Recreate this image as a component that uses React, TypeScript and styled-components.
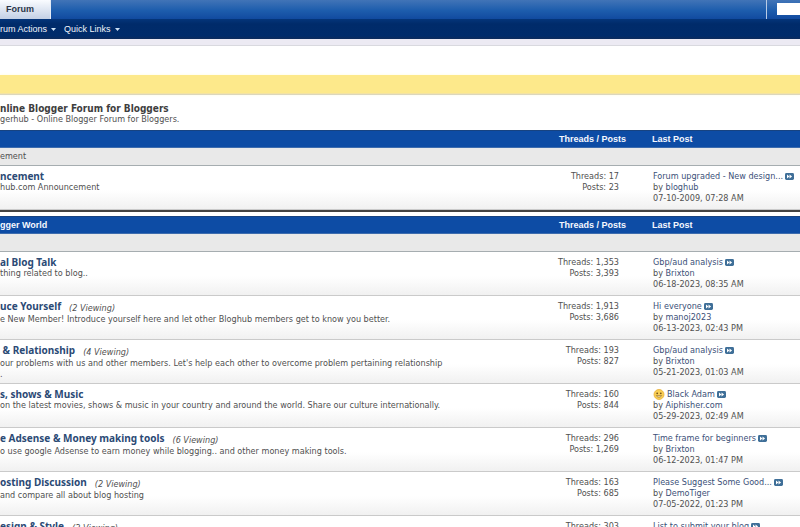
import React from "react";
import styled, { createGlobalStyle } from "styled-components";

const textFont = `"DejaVu Sans Condensed", "DejaVu Sans", Tahoma, sans-serif`;
const titleFont = `"Noto Sans", Tahoma, sans-serif`;
const barFont = `"Liberation Sans", Arial, sans-serif`;

const GlobalStyle = createGlobalStyle`
  *, *::before, *::after { box-sizing: border-box; }
  body { margin: 0; background: #fff; color: #505050; font: 9px/11px ${textFont}; }
  a { color: inherit; text-decoration: none; }
  h1, h2, h3, p { margin: 0; }
`;

const Page = styled.div`
  height: 100vh;
  overflow: hidden;
`;

const TopBar = styled.header`
  display: flex;
  align-items: stretch;
  justify-content: space-between;
  height: 19px;
  background: linear-gradient(#4174b7, #1d5dad 55%, #114a9f);
`;

const Tab = styled.a`
  display: flex;
  align-items: center;
  padding: 0 16px 0 6px;
  background: linear-gradient(#fafcff, #c3d0e5);
  border-right: 1px solid #e4ebf6;
  color: #2b3548;
  font: 700 9px/11px ${barFont};
`;

const SearchArea = styled.form`
  display: flex;
  width: 34px;
  padding: 3px 0 3px 10px;
  overflow: hidden;
  border-left: 1px solid #b9cce6;
`;

const SearchInput = styled.input`
  flex: none;
  width: 120px;
  height: 12px;
  padding: 0 4px;
  border: 0;
  background: #fff;
  font: 9px/11px ${textFont};
`;

const SubNav = styled.nav`
  display: flex;
  align-items: center;
  gap: 8px;
  height: 20px;
  background: linear-gradient(#04357a, #002b6a 25%, #002c6b 85%, #0d2b5c);
`;

const MenuButton = styled.button`
  display: flex;
  align-items: center;
  gap: 4px;
  padding: 0;
  border: 0;
  background: none;
  color: #f2f6fc;
  font: 9px/11px ${barFont};
  cursor: pointer;
`;

const Spacer = styled.div`
  height: 7px;
  background: #eceaf3;
  border-bottom: 1px solid #d9d9df;
`;

const Notice = styled.div`
  height: 20px;
  margin: 29px 0 8px;
  background: #fde98b;
  border-bottom: 1px solid #dcd7bd;
  box-shadow: inset 0 -1px #f3e3a4, 0 0 3px #fffbe0;
`;

const PageTitle = styled.h1`
  color: #3e3e3e;
  font: 700 10px/11px ${textFont};
`;

const PageDescription = styled.p`
  margin-bottom: 5px;
`;

const ForumTable = styled.table`
  width: 100%;
  margin-bottom: 4px;
  table-layout: fixed;
  border-spacing: 0;
  border-bottom: 2px solid #434343;
`;

const StatColumn = styled.col`
  width: 100px;
`;

const PostColumn = styled.col`
  width: 174px;
`;

const HeadCell = styled.th<{ $wide?: boolean }>`
  height: 18px;
  padding: ${(p) => (p.$wide ? "0 0 0 26px" : "0")};
  background: #0d4ca5;
  border-top: 1px solid #174381;
  border-bottom: 1px solid #3d6cae;
  color: #f5f8ff;
  text-align: left;
  vertical-align: middle;
  font: 700 9px/11px ${barFont};
`;

const StatHead = styled(HeadCell)`
  text-align: right;
`;

const IntroCell = styled.td`
  height: 18px;
  padding: 0;
  background: #e9e9e9;
  border-bottom: 1px solid #a6adb0;
`;

const Row = styled.tr`
  background: linear-gradient(#fff 55%, #f0f0f0);
`;

const Cell = styled.td`
  height: 44px;
  padding: 5px 0 0;
  border-bottom: 1px solid #cacaca;
  vertical-align: top;
`;

const StatCell = styled(Cell)`
  padding-right: 7px;
  text-align: right;
`;

const PostCell = styled(Cell)`
  padding-left: 27px;
  white-space: nowrap;
`;

const TitleLine = styled.div`
  display: flex;
  align-items: flex-start;
  gap: 8px;
`;

const ForumTitle = styled.h3`
  color: #2b4a75;
  font: 700 10px/11px ${titleFont};
  white-space: pre;
`;

const Viewing = styled.span`
  padding-top: 2px;
  font-style: italic;
`;

const Description = styled.p`
  white-space: pre-line;
`;

const PostLine = styled.div`
  display: flex;
  align-items: center;
  gap: 2px;
  height: 11px;
`;

const PostLink = styled.a`
  color: #3b5078;
`;

const GoLink = styled.a`
  display: flex;
`;

const Caret = () => (
  <svg width="5" height="3" viewBox="0 0 5 3" aria-hidden="true">
    <path d="M0 0h5L2.5 3z" fill="#cfe3f7" />
  </svg>
);

const GoIcon = () => (
  <svg width="9" height="7" viewBox="0 0 9 7" aria-hidden="true">
    <rect width="9" height="7" rx="1.4" fill="#3f6f98" />
    <path d="M2 1.5v4l2.4-2zM4.5 1.5v4l2.6-2z" fill="#fff" />
  </svg>
);

const Smiley = () => (
  <svg width="12" height="11" viewBox="0 0 12 11" aria-hidden="true">
    <circle cx="6" cy="5.5" r="5" fill="#f8cf55" stroke="#e9ad35" strokeWidth=".8" />
    <circle cx="4.2" cy="4.3" r=".9" fill="#755019" />
    <circle cx="7.8" cy="4.3" r=".9" fill="#755019" />
    <path d="M3.3 6.6c1.2 2 4.2 2 5.4 0z" fill="#fff3c4" stroke="#8a5c1b" strokeWidth=".6" />
  </svg>
);

type Forum = {
  title: string;
  viewing?: number;
  description: string;
  threads: string;
  posts: string;
  last: string;
  user: string;
  date: string;
  smiley?: boolean;
};

const announcements: Forum[] = [
  { title: "ncement", description: "hub.com Announcement", threads: "17", posts: "23", last: "Forum upgraded - New design...", user: "bloghub", date: "07-10-2009, 07:28 AM" },
];

const forums: Forum[] = [
  { title: "al Blog Talk", description: "thing related to blog..", threads: "1,353", posts: "3,393", last: "Gbp/aud analysis", user: "Brixton", date: "06-18-2023, 08:35 AM" },
  { title: "uce Yourself", viewing: 2, description: "e New Member! Introduce yourself here and let other Bloghub members get to know you better.", threads: "1,913", posts: "3,686", last: "Hi everyone", user: "manoj2023", date: "06-13-2023, 02:43 PM" },
  { title: " & Relationship", viewing: 4, description: "our problems with us and other members. Let's help each other to overcome problem pertaining relationship\n.", threads: "193", posts: "827", last: "Gbp/aud analysis", user: "Brixton", date: "05-21-2023, 01:03 AM" },
  { title: "s, shows & Music", description: "on the latest movies, shows & music in your country and around the world. Share our culture internationally.", threads: "160", posts: "844", last: "Black Adam", user: "Aiphisher.com", date: "05-29-2023, 02:49 AM", smiley: true },
  { title: "e Adsense & Money making tools", viewing: 6, description: "o use google Adsense to earn money while blogging.. and other money making tools.", threads: "296", posts: "1,269", last: "Time frame for beginners", user: "Brixton", date: "06-12-2023, 01:47 PM" },
  { title: "osting Discussion", viewing: 2, description: "and compare all about blog hosting", threads: "163", posts: "685", last: "Please Suggest Some Good...", user: "DemoTiger", date: "07-05-2022, 01:23 PM" },
  { title: "esign & Style", viewing: 2, description: "", threads: "303", posts: "", last: "List to submit your blog", user: "", date: "" },
];

const ForumRow = ({ forum }: { forum: Forum }) => (
  <Row>
    <Cell>
      <TitleLine>
        <ForumTitle><a href="#forum">{forum.title}</a></ForumTitle>
        {forum.viewing && <Viewing>({forum.viewing} Viewing)</Viewing>}
      </TitleLine>
      <Description>{forum.description}</Description>
    </Cell>
    <StatCell>
      <div>Threads: {forum.threads}</div>
      {forum.posts && <div>Posts: {forum.posts}</div>}
    </StatCell>
    <PostCell>
      <PostLine>
        {forum.smiley && <Smiley />}
        <PostLink href="#thread">{forum.last}</PostLink>
        <GoLink href="#latest" aria-label="Go to last post"><GoIcon /></GoLink>
      </PostLine>
      {forum.user && <div>by <PostLink href="#member">{forum.user}</PostLink></div>}
      <div>{forum.date}</div>
    </PostCell>
  </Row>
);

const ForumSection = ({ name, intro, items }: { name: string; intro: string; items: Forum[] }) => (
  <ForumTable>
    <colgroup>
      <col />
      <StatColumn />
      <PostColumn />
    </colgroup>
    <thead>
      <tr>
        <HeadCell scope="col">{name}</HeadCell>
        <StatHead scope="col">Threads / Posts</StatHead>
        <HeadCell scope="col" $wide>Last Post</HeadCell>
      </tr>
    </thead>
    <tbody>
      <tr><IntroCell colSpan={3}>{intro}</IntroCell></tr>
      {items.map((forum) => <ForumRow key={forum.title} forum={forum} />)}
    </tbody>
  </ForumTable>
);

export default function App() {
  return (
    <Page>
      <GlobalStyle />
      <TopBar>
        <Tab href="#forum">Forum</Tab>
        <SearchArea>
          <SearchInput type="search" aria-label="Search" />
        </SearchArea>
      </TopBar>
      <SubNav>
        <MenuButton type="button">rum Actions <Caret /></MenuButton>
        <MenuButton type="button">Quick Links <Caret /></MenuButton>
      </SubNav>
      <Spacer />
      <main>
        <Notice />
        <PageTitle>nline Blogger Forum for Bloggers</PageTitle>
        <PageDescription>gerhub - Online Blogger Forum for Bloggers.</PageDescription>
        <ForumSection name="" intro="ement" items={announcements} />
        <ForumSection name="gger World" intro="" items={forums} />
      </main>
    </Page>
  );
}
